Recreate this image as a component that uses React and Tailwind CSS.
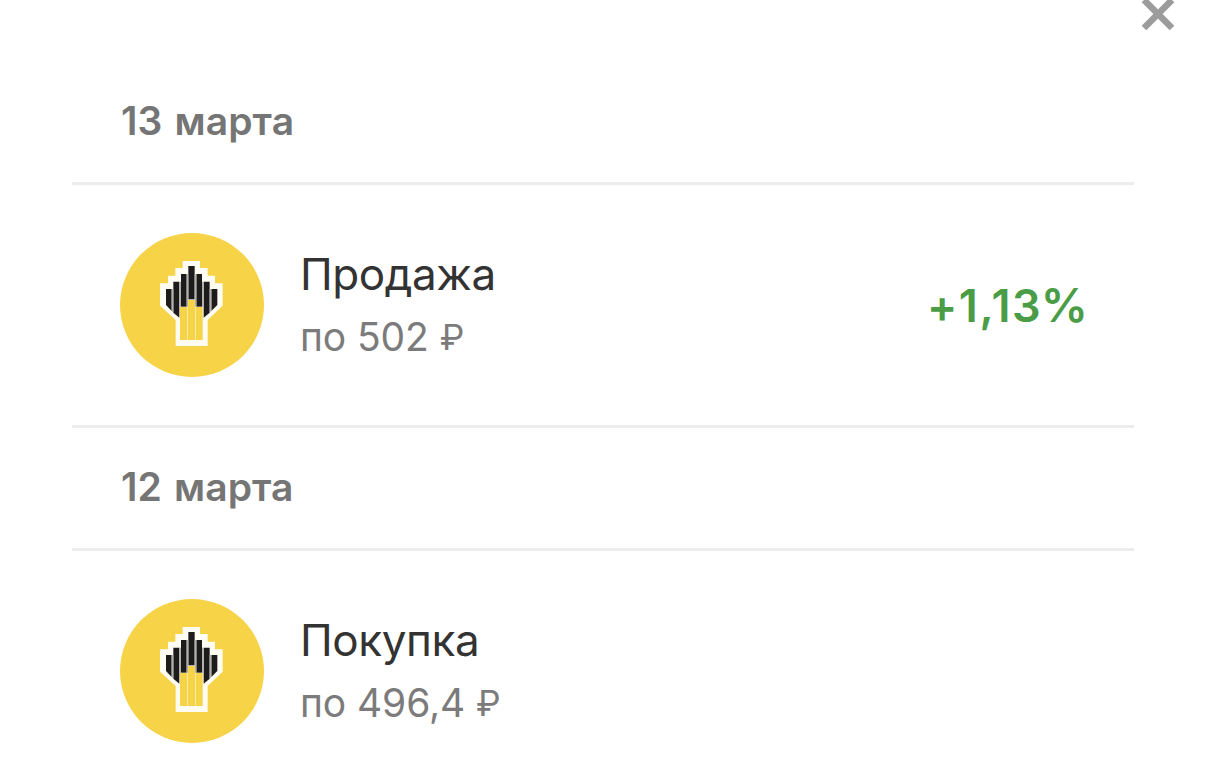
import React from "react";

const operations = [
  {
    date: "13 марта",
    title: "Продажа",
    price: "по 502",
    change: "+1,13",
  },
  {
    date: "12 марта",
    title: "Покупка",
    price: "по 496,4",
  },
];

const CompanyLogo = () => {
  return (
    <svg viewBox="0 0 432 432" className="w-36 h-36 shrink-0">
      <circle cx="216" cy="216" r="216" fill="#f7d348" />
      <g transform="translate(90 51)">
        <path d="M98 33H150V54H173V77H195V100H218V167L173 210V288H77V210L30 167V100H54V77H76V54H98Z" fill="#fffdf3" />
        {/* black feathers */}
        <path d="M48 117H65V183L48 165Z" fill="#1d1b1c" />
        <path d="M70 95H88V203L70 188Z" fill="#1d1b1c" />
        <path d="M93 72H110V170H93Z" fill="#1d1b1c" />
        <path d="M115 48H134V148H115Z" fill="#1d1b1c" />
        <path d="M139 72H156V170H139Z" fill="#1d1b1c" />
        <path d="M161 95H179V188L161 203Z" fill="#1d1b1c" />
        <path d="M184 117H202V165L184 183Z" fill="#1d1b1c" />
        <path d="M65 117H70V188L65 183ZM88 95H93V170H88ZM110 72H115V170H110ZM134 72H139V170H134ZM156 95H161V170H156ZM179 117H184V183L179 188Z" fill="#b3b1ad" />
        {/* yellow base */}
        <path d="M90 171H111V270H90ZM114 150H135V270H114ZM138 171H158V270H138Z" fill="#f7d348" />
        <path d="M111 171H114V270H111ZM135 171H138V270H135Z" fill="#fbe9a4" />
      </g>
    </svg>
  );
};

const OperationGroup = ({ item }) => {
  return (
    <section>
      <h2 className="h-[123px] flex items-center pl-[49px] pr-12 pb-1 border-b-3 border-[#ededed] text-[39px] leading-none font-semibold text-[#757575] tracking-[0.1px] [word-spacing:2px]">
        {item.date}
      </h2>
      <div className="h-[243px] flex items-center px-12 border-b-3 border-[#ededed]">
        <CompanyLogo />
        <div className="ml-9 flex-1">
          <div className="text-[44px] leading-[60px] text-[#333333] tracking-[-0.4px]">{item.title}</div>
          <div className="mt-[3px] text-[39px] leading-[60px] text-[#7b7b7b] tracking-[-0.1px]">
            {item.price} <span className="inline-block -translate-y-px text-[35px] leading-none">₽</span>
          </div>
        </div>
        {item.change && (
          <div className="-mr-0.5 -mt-0.5 text-[45px] leading-none font-semibold text-[#4a9c46] tracking-[1.6px]">
            {item.change}
            <span className="-ml-[1.5px] text-[47px] leading-none tracking-normal">%</span>
          </div>
        )}
      </div>
    </section>
  );
};

export default function App() {
  return (
    <div className="relative w-full h-[780px] overflow-hidden bg-white px-[72px] pt-[62px] font-['Inter',sans-serif]">
      <button className="absolute top-[-3px] right-[30px] w-9 h-9" aria-label="Закрыть">
        <svg viewBox="0 0 36 36" className="w-9 h-9" stroke="#9c9c9c" strokeWidth="6.6">
          <path d="M4 3L32 31M32 3L4 31" />
        </svg>
      </button>
      {operations.map((item) => (
        <OperationGroup key={item.date} item={item} />
      ))}
    </div>
  );
}
